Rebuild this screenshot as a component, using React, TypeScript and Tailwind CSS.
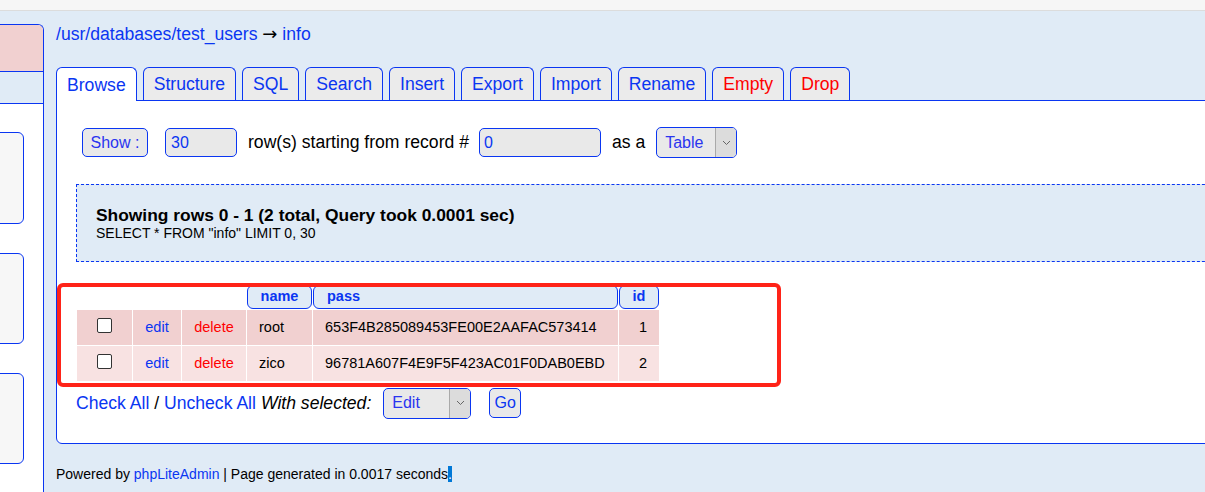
const tabs = [
  { label: "Browse", active: true },
  { label: "Structure" },
  { label: "SQL" },
  { label: "Search" },
  { label: "Insert" },
  { label: "Export" },
  { label: "Import" },
  { label: "Rename" },
  { label: "Empty", danger: true },
  { label: "Drop", danger: true },
];

const rows = [
  { name: "root", pass: "653F4B285089453FE00E2AAFAC573414", id: 1, bg: "bg-[#f1d0d0]" },
  { name: "zico", pass: "96781A607F4E9F5F423AC01F0DAB0EBD", id: 2, bg: "bg-[#f8e2e2]" },
];

function Chevron() {
  return (
    <svg width="9" height="6" viewBox="0 0 9 6" fill="none">
      <path d="M1 1 L4.5 4.5 L8 1" stroke="#666" strokeWidth="1" />
    </svg>
  );
}

function SelectBox({ value, w }: { value: string; w: string }) {
  return (
    <div className={`flex h-[31px] ${w} overflow-hidden rounded-[5px] border border-[#0a36f2] bg-[#e9e9e9]`}>
      <span className="flex flex-1 items-center pl-[8px] text-[16px] text-[#2a35f0]">{value}</span>
      <span className="flex w-[21px] items-center justify-center border-l border-[#a9a9a9] bg-[#dcdcdc]">
        <Chevron />
      </span>
    </div>
  );
}

function App() {
  return (
    <div className="h-[492px] w-[1205px] overflow-hidden bg-[#e0ebf6] font-['Liberation_Sans',Arial,sans-serif] text-black">
      <div className="h-[11px] border-b border-[#dcdcdc] bg-[#f6f6f6]" />
      <div className="flex h-[481px]">
        {/* sidebar, cut off on the left */}
        <aside className="mt-[13px] flex w-[44px] shrink-0 flex-col overflow-hidden rounded-tr-[6px] border-r border-t border-[#0a36f2]">
          <div className="h-[47px] border-b border-[#0a36f2] bg-[#f1d0d0]" />
          <div className="h-[32px] border-b border-[#0a36f2]" />
          <div className="flex flex-1 flex-col gap-[29px] bg-white pt-[28px]">
            <div className="-ml-[10px] h-[92px] w-[34px] rounded-r-[6px] border border-[#0a36f2] bg-[#f7f7f7]" />
            <div className="-ml-[10px] h-[91px] w-[34px] rounded-r-[6px] border border-[#0a36f2] bg-[#f7f7f7]" />
            <div className="-ml-[10px] h-[91px] w-[34px] rounded-r-[6px] border border-[#0a36f2] bg-[#f7f7f7]" />
          </div>
        </aside>

        <main className="min-w-0 flex-1 pl-[12px]">
          <div className="mt-[13px] h-[20px] text-[17.6px] leading-[20px] text-[#0a36f2]">
            /usr/databases/test_users{" "}
            <span className="font-['DejaVu_Sans',sans-serif] text-[18px] text-black">→</span> info
          </div>

          <div className="mt-[23px] flex items-end gap-[6px]">
            {tabs.map((t) => (
              <div
                key={t.label}
                className={
                  t.active
                    ? "relative z-10 -mb-px flex h-[34px] items-center rounded-t-[6px] border border-b-0 border-[#0a36f2] bg-white px-[10px] pt-px text-[17.6px] text-[#0a36f2]"
                    : `flex h-[33px] items-center rounded-t-[6px] border border-b-0 border-[#0a36f2] bg-[#ebebeb] px-[10px] pt-px text-[17.6px] ${t.danger ? "text-[#f00]" : "text-[#0a36f2]"}`
                }
              >
                {t.label}
              </div>
            ))}
          </div>

          <div className="relative h-[344px] w-[1250px] rounded-bl-[6px] border border-[#0a36f2] bg-white pl-[19px] pt-[26px]">
            {/* display options */}
            <div className="flex h-[31px] items-center text-[17.6px]">
              <div className="ml-[6px] flex h-[29px] w-[66px] items-center justify-center rounded-[5px] border border-[#0a36f2] bg-[#e9e9e9] text-[16px] text-[#2a35f0]">
                Show :
              </div>
              <div className="ml-[17px] flex h-[29px] w-[72px] items-center rounded-[5px] border border-[#0a36f2] bg-[#e9e9e9] pl-[5px] text-[16px] text-[#0a36f2]">
                30
              </div>
              <span className="ml-[11px]">row(s) starting from record #</span>
              <div className="ml-[10px] flex h-[29px] w-[122px] items-center rounded-[5px] border border-[#0a36f2] bg-[#e9e9e9] pl-[4px] text-[16px] text-[#0a36f2]">
                0
              </div>
              <span className="ml-[11px]">as a</span>
              <div className="ml-[11px]">
                <SelectBox value="Table" w="w-[81px]" />
              </div>
            </div>

            {/* query summary */}
            <div className="mt-[26px] h-[78px] border border-dashed border-[#0a36f2] bg-[#e0ebf6] pl-[19px] pt-[20px]">
              <div className="text-[17.4px] font-bold leading-[20px]">
                Showing rows 0 - 1 (2 total, Query took 0.0001 sec)
              </div>
              <div className="text-[14px] leading-[17px]">SELECT * FROM "info" LIMIT 0, 30</div>
            </div>

            {/* results */}
            <table className="mt-[22px] table-fixed border-separate border-spacing-[1px] text-[14.5px]">
              <colgroup>
                <col className="w-[55px]" />
                <col className="w-[48px]" />
                <col className="w-[64px]" />
                <col className="w-[65px]" />
                <col className="w-[305px]" />
                <col className="w-[40px]" />
              </colgroup>
              <thead>
                <tr>
                  <th colSpan={3} />
                  <th className="h-[23px] rounded-[6px] border border-[#0a36f2] bg-[#e0ebf6] p-0 text-center font-bold text-[#0a36f2]">
                    name
                  </th>
                  <th className="h-[23px] rounded-[6px] border border-[#0a36f2] bg-[#e0ebf6] p-0 pl-[13px] text-left font-bold text-[#0a36f2]">
                    pass
                  </th>
                  <th className="h-[23px] rounded-[6px] border border-[#0a36f2] bg-[#e0ebf6] p-0 text-center font-bold text-[#0a36f2]">
                    id
                  </th>
                </tr>
              </thead>
              <tbody>
                {rows.map((r) => (
                  <tr key={r.id} className="h-[35px]">
                    <td className={`${r.bg} p-0 text-center`}>
                      <span className="inline-block h-[15px] w-[15px] translate-y-[2px] rounded-[2px] border border-[#333] bg-white" />
                    </td>
                    <td className={`${r.bg} p-0 pt-px text-center text-[#0a36f2]`}>edit</td>
                    <td className={`${r.bg} p-0 pt-px text-center text-[#f00]`}>delete</td>
                    <td className={`${r.bg} p-0 pl-[12px] pt-px`}>{r.name}</td>
                    <td className={`${r.bg} p-0 pl-[12px] pt-px`}>{r.pass}</td>
                    <td className={`${r.bg} p-0 pr-[12px] pt-px text-right`}>{r.id}</td>
                  </tr>
                ))}
              </tbody>
            </table>

            <div className="mt-[6px] flex items-center text-[17.6px]">
              <span className="text-[#0a36f2]">Check All</span>
              <span>&nbsp;/&nbsp;</span>
              <span className="text-[#0a36f2]">Uncheck All</span>
              <span className="ml-[5px] italic">With selected:</span>
              <div className="ml-[12px]">
                <SelectBox value="Edit" w="w-[88px]" />
              </div>
              <div className="ml-[18px] flex h-[30px] w-[32px] items-center justify-center rounded-[5px] border border-[#0a36f2] bg-[#e9e9e9] text-[16px] text-[#0a36f2]">
                Go
              </div>
            </div>

            {/* red annotation frame */}
            <div className="pointer-events-none absolute left-0 top-[182px] h-[104px] w-[724px] rounded-[6px] border-[4px] border-[#ff2318]" />
          </div>

          <div className="mt-[22px] text-[14px] leading-[16px]">
            Powered by <span className="text-[#0a36f2]">phpLiteAdmin</span> | Page generated in 0.0017 seconds
            <span className="bg-[#0078d7] text-white">.</span>
          </div>
        </main>
      </div>
    </div>
  );
}

export default App;
